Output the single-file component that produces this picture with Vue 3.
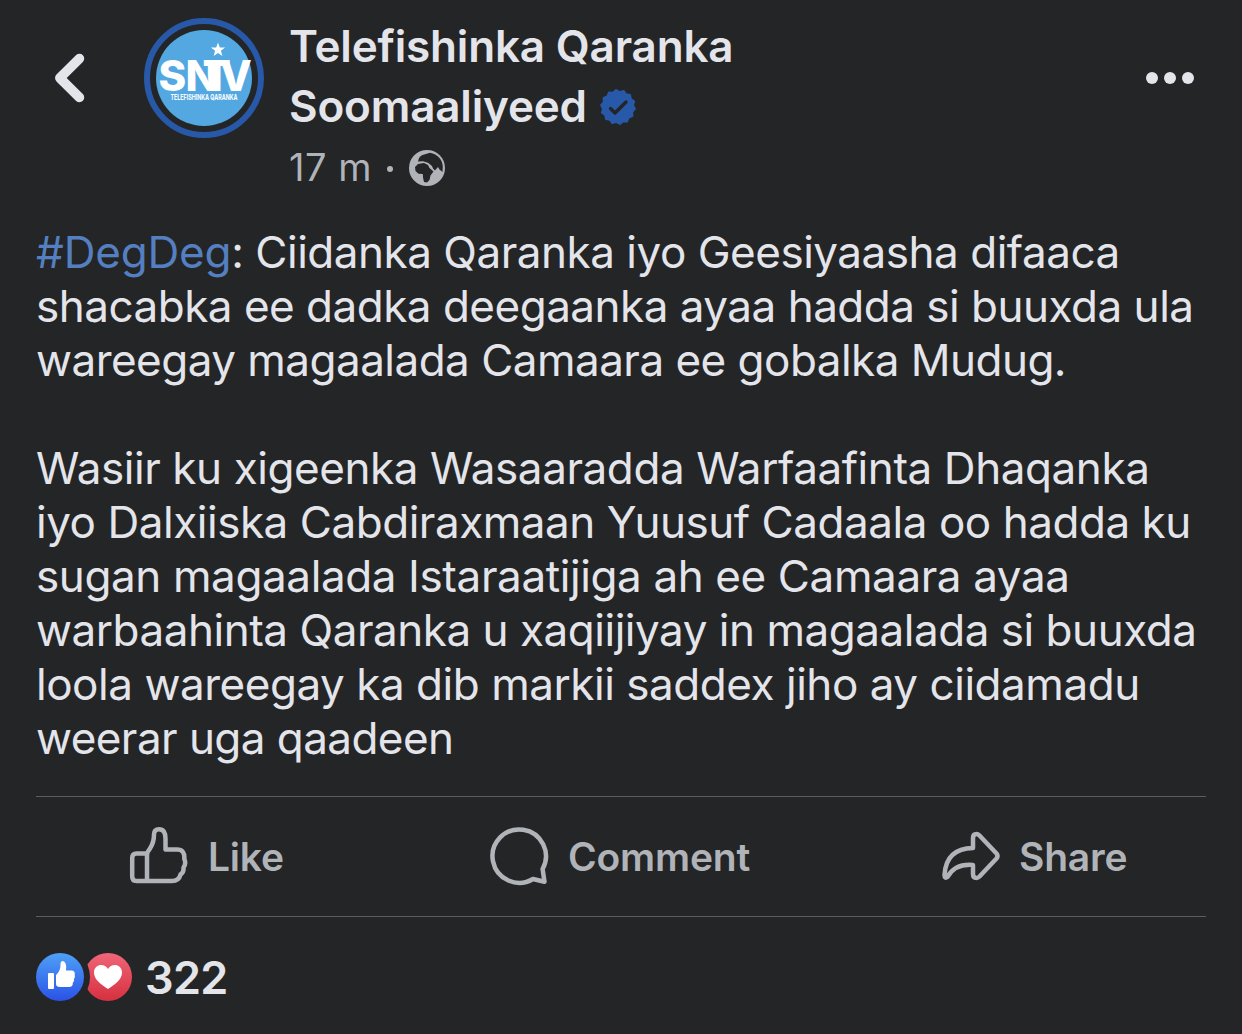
<template>
  <div class="post">
    <header class="post-header">
      <button class="back-btn" aria-label="Back">
        <svg width="32" height="52" viewBox="0 0 32 52">
          <path d="M26.5 6.500 L6.800 26 L26.500 45.500" fill="none" stroke="#e4e5ea" stroke-width="9.5" stroke-linecap="round" stroke-linejoin="round" />
        </svg>
      </button>

      <div class="avatar">
        <svg width="96" height="96" viewBox="0 0 96 96">
          <circle cx="48" cy="48" r="48" fill="#53a8e1" />
          <path d="M62 12.5 l1.8 5 5.3 .1 -4.2 3.2 1.5 5.2 -4.4 -3 -4.4 3 1.5 -5.2 -4.2 -3.2 5.3 -.1z" fill="#fff" />
          <text class="logo-text" x="2.5 29.500 46.500 63.500" y="60.5">SNTV</text>
          <text class="logo-sub" x="14.5" y="69.5" textLength="67" lengthAdjust="spacingAndGlyphs">TELEFISHINKA QARANKA</text>
        </svg>
      </div>

      <div class="author">
        <div class="name">Telefishinka Qaranka</div>
        <div class="name second">
          <span>Soomaaliyeed</span>
          <svg class="verified" width="36" height="36" viewBox="-18 -18 36 36">
            <polygon :points="badgePoints" fill="#2859a9" stroke="#2859a9" stroke-width="2" stroke-linejoin="round" />
            <path d="M-7.5 1.500 L-3 6 L8 -5" fill="none" stroke="#242527" stroke-width="3.4" stroke-linecap="round" stroke-linejoin="round" />
          </svg>
        </div>
        <div class="meta">
          <span class="time">17 m</span>
          <i class="sep"></i>
          <svg width="36" height="36" viewBox="0 0 36 36">
            <circle cx="18" cy="18" r="18" fill="#b0b3b8" />
            <path d="M9 11.500 C9.500 8 11 6 13.500 5 L21 2.800 C28.500 4 34 10 33.800 17 L33.500 22 L30.500 19.500 L29 17 L26 20.500 L24 18.500 L23 16 L19 12.800 L14 11.300 Z" fill="#242527" />
            <path d="M6 17 L9 14 L15 13 L19 15 L20.500 18 L24.500 21.500 L21.500 25.500 L20.500 30 L18 32.500 L15 32 L14 27.500 L13.800 24 L9.500 23.800 L6.500 21 Z" fill="#242527" />
          </svg>
        </div>
      </div>

      <button class="more-btn" aria-label="More">
        <i v-for="n in 3" :key="n"></i>
      </button>
    </header>

    <div class="content">
      <p v-for="(paragraph, index) in paragraphs" :key="index">
        <span v-for="line in paragraph" :key="line.text" class="line" :style="{ letterSpacing: line.spacing + 'px' }"><a v-if="line.tag">{{ line.tag }}</a>{{ line.text }}</span>
      </p>
    </div>

    <div class="actions">
      <button class="action like">
        <svg width="60" height="60" viewBox="0 0 60 60">
          <path d="M18 27.500 H7.500 Q3.200 27.500 3.200 32 V50.500 Q3.200 55 7.500 55 H43 Q50 55 51.500 48.500 Q55 46.500 54.500 41.500 Q57.500 37.500 55.300 33 Q56 23.500 48 23.500 H36.500 V12.500 Q36.500 3.200 30 3.200 Q25 3.200 25 8.500 Q25 16.500 21 22.500 Q18 26 18 29 V54" />
        </svg>
        <span>Like</span>
      </button>
      <button class="action comment">
        <svg width="60" height="60" viewBox="0 0 60 60">
          <path d="M53.600 43 A26.700 26.700 0 1 0 44 53 L55.500 55.800 Z" />
        </svg>
        <span>Comment</span>
      </button>
      <button class="action share">
        <svg width="60" height="60" viewBox="0 0 60 60">
          <path d="M33 22 V12 Q33 8 36.500 8 Q38 8 39.500 9.500 L56.500 27.500 Q58.500 30 56.500 32.500 L39.500 50.500 Q38 52 36.500 52 Q33 52 33 48 V39 Q15 37.500 7.500 51 Q4.500 53 4.500 49 Q6 22.500 33 22 Z" />
        </svg>
        <span>Share</span>
      </button>
    </div>

    <footer class="reactions">
      <svg width="96" height="48" viewBox="0 0 96 48">
        <defs>
          <linearGradient id="blue" x1="0" y1="0" x2="0" y2="1">
            <stop offset="0" stop-color="#4fa0f7" />
            <stop offset="1" stop-color="#2a52e6" />
          </linearGradient>
          <linearGradient id="red" x1="0" y1="0" x2="0" y2="1">
            <stop offset="0" stop-color="#ef6678" />
            <stop offset="1" stop-color="#d6303f" />
          </linearGradient>
        </defs>
        <circle cx="72" cy="24" r="24" fill="url(#red)" />
        <circle cx="24" cy="24" r="30" fill="#242527" />
        <circle cx="24" cy="24" r="24" fill="url(#blue)" />
        <rect x="12" y="20" width="6" height="16" rx="1" fill="#fff" />
        <path d="M20 22 Q25 17.500 24.500 11 Q24.500 8 27 8 Q31 9 30 17.500 H36 Q39.500 18 38.700 22 Q39.500 24 38 26 Q38.500 28.500 36.800 30 Q37 34 33 34 H24 Q20 34 20 31 Z" fill="#fff" />
        <path d="M72 36 C66 32 58 27 58 19.500 C58 11 68.500 9.500 72 16 C75.500 9.500 86 11 86 19.500 C86 27 78 32 72 36 Z" fill="#fff" />
      </svg>
      <span class="count">322</span>
    </footer>
  </div>
</template>

<script setup>
const paragraphs = [
  [
    { tag: '#DegDeg', text: ': Ciidanka Qaranka iyo Geesiyaasha difaaca', spacing: -0.48 },
    { text: 'shacabka ee dadka deegaanka ayaa hadda si buuxda ula', spacing: -0.5 },
    { text: 'wareegay magaalada Camaara ee gobalka Mudug.', spacing: -0.52 },
  ],
  [
    { text: 'Wasiir ku xigeenka Wasaaradda Warfaafinta Dhaqanka', spacing: -0.42 },
    { text: 'iyo Dalxiiska Cabdiraxmaan Yuusuf Cadaala oo hadda ku', spacing: -0.46 },
    { text: 'sugan magaalada Istaraatijiga ah ee Camaara ayaa', spacing: -0.39 },
    { text: 'warbaahinta Qaranka u xaqiijiyay in magaalada si buuxda', spacing: -0.47 },
    { text: 'loola wareegay ka dib markii saddex jiho ay ciidamadu', spacing: -0.46 },
    { text: 'weerar uga qaadeen', spacing: -0.55 },
  ],
]

// scalloped edge of the verified badge
const badgePoints = Array.from({ length: 28 }, (_, i) => {
  const r = i % 2 ? 17 : 15
  const a = ((i + 0.5) * Math.PI) / 14
  return `${(r * Math.sin(a)).toFixed(2)},${(-r * Math.cos(a)).toFixed(2)}`
}).join(' ')
</script>

<style>
body {
  background: #242527;
}
</style>

<style scoped>
.post {
  box-sizing: border-box;
  height: 1034px;
  padding: 16px 36px 0;
  background: #242527;
  color: #e4e5ea;
  font-family: Inter, 'Liberation Sans', sans-serif;
  overflow: hidden;
}

button {
  border: none;
  background: none;
  padding: 0;
  font: inherit;
  color: inherit;
}

.post-header {
  display: flex;
  align-items: flex-start;
  height: 209px;
}

.back-btn {
  width: 108px;
  padding: 36px 0 0 17px;
  text-align: left;
}

.back-btn svg,
.avatar svg,
.meta svg {
  display: block;
}

.avatar svg {
  overflow: visible;
}

.avatar {
  box-sizing: border-box;
  width: 120px;
  height: 120px;
  margin-top: 2px;
  padding: 6px;
  border: 6px solid #2859a9;
  border-radius: 50%;
}

.logo-text {
  font-size: 42px;
  font-weight: 800;
  fill: #fff;
}

.logo-sub {
  font-size: 8px;
  font-weight: 700;
  fill: #fff;
}

.author {
  flex: 1;
  margin-left: 25px;
}

.name {
  font-size: 44px;
  font-weight: 600;
  line-height: 60px;
  letter-spacing: -0.17px;
  white-space: nowrap;
}

.second {
  display: flex;
  align-items: center;
  gap: 13px;
}

.verified {
  margin-top: 2px;
}

.meta {
  display: flex;
  align-items: center;
  height: 62px;
  font-size: 38px;
  color: #b0b3b8;
}

.meta svg {
  margin-top: 2px;
}

.time {
  letter-spacing: 0.5px;
}

.sep {
  width: 6px;
  height: 6px;
  margin: 4px 16px 0 15px;
  border-radius: 50%;
  background: #b0b3b8;
}

.more-btn {
  display: flex;
  gap: 6px;
  margin: 56px 12px 0 0;
}

.more-btn i {
  width: 12px;
  height: 12px;
  border-radius: 50%;
  background: #e4e5ea;
}

.content {
  height: 571px;
  font-size: 44px;
  line-height: 54px;
}

.content p {
  margin: 0 0 54px;
}

.line {
  display: block;
  white-space: nowrap;
}

.content a {
  color: #547fc0;
  letter-spacing: -0.2px;
}

.actions {
  box-sizing: border-box;
  display: flex;
  height: 121px;
  padding-bottom: 2px;
  border-top: 1px solid #5c5d60;
  border-bottom: 1px solid #5c5d60;
  color: #b0b3b8;
}

.action {
  display: flex;
  align-items: center;
  gap: 19px;
  font-size: 39px;
  font-weight: 600;
  letter-spacing: -0.2px;
}

.action span {
  margin-top: 1px;
}

.action path {
  fill: none;
  stroke: #b0b3b8;
  stroke-width: 4.5;
  stroke-linejoin: round;
}

.like {
  width: 360px;
  padding-left: 93px;
}

.comment {
  width: 452px;
  padding-left: 93px;
}

.share {
  padding-left: 92px;
}

.reactions {
  display: flex;
  align-items: center;
  gap: 13px;
  height: 120px;
}

.count {
  font-size: 45px;
  font-weight: 600;
  letter-spacing: -0.7px;
}
</style>
